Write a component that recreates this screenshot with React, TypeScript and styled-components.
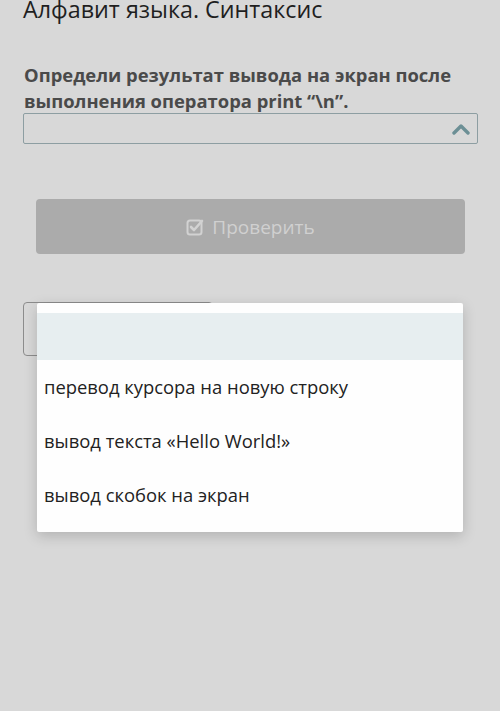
import React from "react";
import styled, { createGlobalStyle } from "styled-components";

const options = [
  "перевод курсора на новую строку",
  "вывод текста «Hello World!»",
  "вывод скобок на экран",
];

export default function App() {
  return (
    <>
      <GlobalStyle />
      <Page>
        <Title>Алфавит языка. Синтаксис</Title>
        <Question>
          Определи результат вывода на экран после выполнения оператора print
          “\n”.
        </Question>
        <Select>
          <svg width="20" height="12" viewBox="0 0 20 12">
            <path
              d="M3 10 L10 3 L17 10"
              fill="none"
              stroke="#6c8f95"
              strokeWidth="3.4"
              strokeLinecap="round"
              strokeLinejoin="round"
            />
          </svg>
        </Select>
        <CheckButton>
          <svg width="18" height="18" viewBox="0 0 18 18">
            <rect
              x="1.5"
              y="2.5"
              width="14"
              height="14"
              rx="2.5"
              fill="none"
              stroke="#d2d2d2"
              strokeWidth="2"
            />
            <path
              d="M5 9 L8 12 L16 3"
              fill="none"
              stroke="#d2d2d2"
              strokeWidth="2.6"
              strokeLinecap="round"
              strokeLinejoin="round"
            />
          </svg>
          Проверить
        </CheckButton>
        <Lower>
          <GhostButton />
          <Menu>
            <Option active />
            {options.map((o) => (
              <Option key={o}>{o}</Option>
            ))}
          </Menu>
        </Lower>
      </Page>
    </>
  );
}

const GlobalStyle = createGlobalStyle`
  html, body {
    margin: 0;
    padding: 0;
    background: #d8d8d8;
    overflow: hidden;
  }
  body {
    font-family: "Open Sans", "Noto Sans", sans-serif;
    height: 711px;
  }
`;

const Page = styled.div`
  display: flex;
  flex-direction: column;
  padding: 0 22px 0 23px;
`;

const Title = styled.h1`
  margin: -6px 0 0;
  font-size: 23.3px;
  font-weight: 400;
  line-height: 31px;
  color: #1f1f1f;
`;

const Question = styled.div`
  margin-top: 37px;
  padding-left: 1px;
  font-size: 18.4px;
  font-weight: 700;
  line-height: 26px;
  color: #4a4a4a;
`;

const Select = styled.div`
  box-sizing: border-box;
  height: 31px;
  margin-top: -1px;
  border: 1.5px solid #8d9ea2;
  border-radius: 2px;
  display: flex;
  align-items: center;
  justify-content: flex-end;
  padding-right: 6px;
`;

const CheckButton = styled.div`
  box-sizing: border-box;
  margin: 55px 13px 0;
  height: 55px;
  background: #ababab;
  border-radius: 4px;
  display: flex;
  align-items: center;
  justify-content: center;
  gap: 8px;
  font-size: 19px;
  color: #d0d0d0;
`;

const Lower = styled.div`
  position: relative;
  margin-top: 48px;
`;

const GhostButton = styled.div`
  box-sizing: border-box;
  width: 190px;
  height: 54px;
  border: 1.5px solid #8c8c8c;
  border-radius: 4px;
`;

const Menu = styled.div`
  position: absolute;
  top: 1px;
  left: 14px;
  width: 426px;
  padding: 10px 0;
  background: #fefefe;
  border-radius: 2px;
  box-shadow: 0 4px 14px rgba(0, 0, 0, 0.18);
`;

const Option = styled.div<{ active?: boolean }>`
  box-sizing: border-box;
  min-height: ${({ active }) => (active ? "47px" : "54px")};
  padding: 14px 7px;
  font-size: 18.4px;
  line-height: 26px;
  color: #222;
  background: ${({ active }) => (active ? "#e7eef0" : "transparent")};
`;
